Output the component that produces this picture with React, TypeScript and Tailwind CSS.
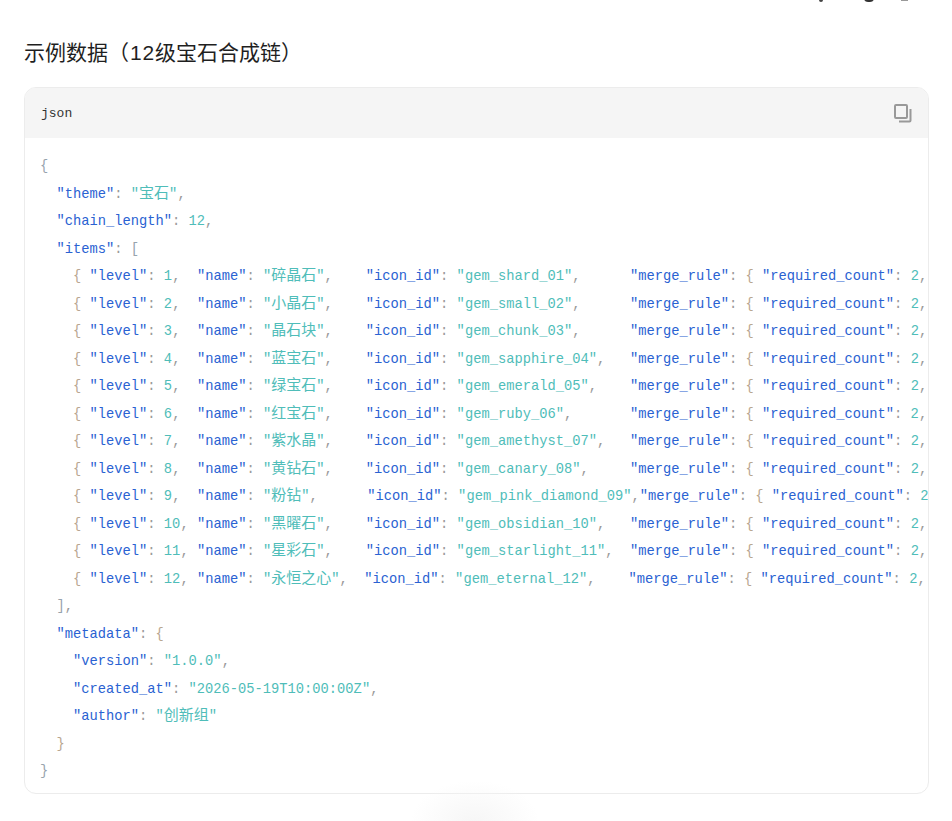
const MONO = "font-['Liberation_Mono',monospace]";

function K({ t }: { t: string }) {
  return <span className="text-[#2a62d2]">"{t}"</span>;
}

function Str({ t }: { t: string }) {
  const parts = t.split(/([\u4e00-\u9fff]+)/);
  return (
    <span className="text-[#4fbdb9]">
      "
      {parts.map((p, i) =>
        /[\u4e00-\u9fff]/.test(p) ? (
          <span key={i} className="font-['Noto_Sans_CJK_SC',sans-serif] text-[15px] leading-none">
            {p}
          </span>
        ) : (
          p
        )
      )}
      "
    </span>
  );
}

function N({ t }: { t: string | number }) {
  return <span className="text-[#4fbdb9]">{t}</span>;
}

function P({ t }: { t: string }) {
  return <span className="text-[#9a9a9a]">{t}</span>;
}

function B({ t }: { t: string }) {
  return <span className="text-[#b8a690]">{t}</span>;
}

function G({ t }: { t: string }) {
  return <span className="text-[#97a3ad]">{t}</span>;
}

function Line({ children }: { children: React.ReactNode }) {
  return <div className="h-[27.5px] leading-[27.5px] whitespace-pre">{children}</div>;
}

const items: [string, string, number, number][] = [
  ["碎晶石", "gem_shard_01", 4, 6],
  ["小晶石", "gem_small_02", 4, 6],
  ["晶石块", "gem_chunk_03", 4, 6],
  ["蓝宝石", "gem_sapphire_04", 4, 3],
  ["绿宝石", "gem_emerald_05", 4, 4],
  ["红宝石", "gem_ruby_06", 4, 7],
  ["紫水晶", "gem_amethyst_07", 4, 3],
  ["黄钻石", "gem_canary_08", 4, 5],
  ["粉钻", "gem_pink_diamond_09", 6, 0],
  ["黑曜石", "gem_obsidian_10", 4, 3],
  ["星彩石", "gem_starlight_11", 4, 2],
  ["永恒之心", "gem_eternal_12", 2, 4],
];

function CopyIcon() {
  return (
    <svg width="20" height="20" viewBox="0 0 20 20" fill="none" stroke="#999999" strokeWidth="2">
      <rect x="2" y="2" width="12" height="13" rx="1" />
      <path d="M17.5 6v11.5a1 1 0 0 1-1 1H6" />
    </svg>
  );
}

export default function App() {
  return (
    <div className="relative h-[821px] w-[952px] overflow-hidden bg-white font-['Liberation_Sans','Noto_Sans_CJK_SC',sans-serif]">
      <div className="flex h-[3px] overflow-hidden pl-[819px]">
        <div className="mt-[-2px] h-[4px] w-[4px] rounded-full bg-[#444444]" />
        <div className="ml-[41px] mt-[-6px] h-[8px] w-[10px] rounded-full bg-[#333333]" />
        <div className="ml-[27px] mt-[-1px] h-[2px] w-[7px] bg-[#999999]" />
      </div>

      <h2 className="mt-[35px] ml-6 h-[30px] text-[21px] leading-[30px] font-normal text-[#1f1f1f] [text-spacing-trim:space-all] [font-feature-settings:'palt'_0,'halt'_0,'chws'_0]">
        示例数据（<span className="ml-[1px] tracking-[0.8px]">12</span>级宝石合成链）
      </h2>

      <div className="mt-[19px] ml-6 w-[905px] overflow-hidden rounded-xl border border-[#ececec]">
        <div className="flex h-[50px] items-center justify-between bg-[#f5f5f5] pr-[15px] pl-4">
          <span className={`${MONO} mt-[2px] text-[13px] text-[#333333]`}>json</span>
          <CopyIcon />
        </div>
        <div className={`${MONO} overflow-hidden pt-[15px] pb-[7px] pl-[15px] text-[13.75px] text-[#999999]`}>
          <Line>
            <G t="{" />
          </Line>
          <Line>
            {"  "}
            <K t="theme" />
            <P t=": " />
            <Str t="宝石" />
            <P t="," />
          </Line>
          <Line>
            {"  "}
            <K t="chain_length" />
            <P t=": " />
            <N t={12} />
            <P t="," />
          </Line>
          <Line>
            {"  "}
            <K t="items" />
            <P t=": " />
            <G t="[" />
          </Line>
          {items.map(([name, icon, gap, gap2], i) => (
            <Line key={icon}>
              {"    "}
              <B t="{" />
              {" "}
              <K t="level" />
              <P t=": " />
              <N t={i + 1} />
              <P t="," />
              {i < 9 ? "  " : " "}
              <K t="name" />
              <P t=": " />
              <Str t={name} />
              <P t="," />
              {" ".repeat(gap)}
              <K t="icon_id" />
              <P t=": " />
              <Str t={icon} />
              <P t="," />
              {" ".repeat(gap2)}
              <K t="merge_rule" />
              <P t=": " />
              <B t="{" />
              {" "}
              <K t="required_count" />
              <P t=": " />
              <N t={2} />
              {i === 8 ? null : <P t="," />}
            </Line>
          ))}
          <Line>
            {"  "}
            <G t="]" />
            <P t="," />
          </Line>
          <Line>
            {"  "}
            <K t="metadata" />
            <P t=": " />
            <B t="{" />
          </Line>
          <Line>
            {"    "}
            <K t="version" />
            <P t=": " />
            <Str t="1.0.0" />
            <P t="," />
          </Line>
          <Line>
            {"    "}
            <K t="created_at" />
            <P t=": " />
            <Str t="2026-05-19T10:00:00Z" />
            <P t="," />
          </Line>
          <Line>
            {"    "}
            <K t="author" />
            <P t=": " />
            <Str t="创新组" />
          </Line>
          <Line>
            {"  "}
            <B t="}" />
          </Line>
          <Line>
            <G t="}" />
          </Line>
        </div>
      </div>

      <div className="pointer-events-none absolute top-[780px] left-[410px] h-[84px] w-[130px] bg-[radial-gradient(ellipse_at_center,#f6f6f6_0%,rgba(255,255,255,0)_70%)]" />
    </div>
  );
}
